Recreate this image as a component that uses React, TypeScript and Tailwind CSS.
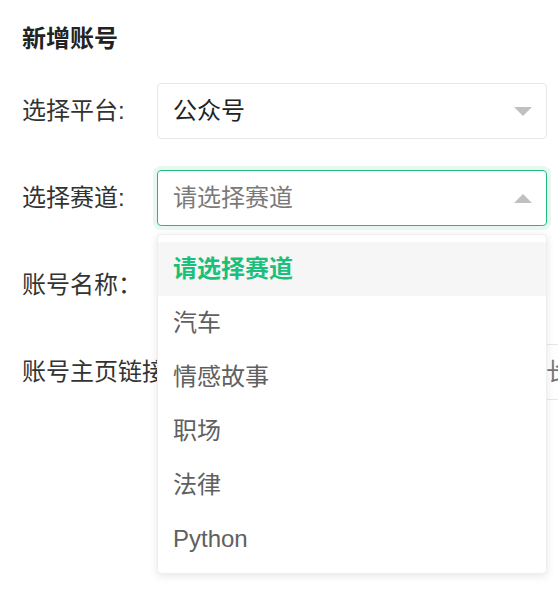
import React from "react";

const font = { fontFamily: '"Liberation Sans", "Noto Sans CJK SC", sans-serif' };

function Caret({ up }: { up?: boolean }) {
  return (
    <svg width="18" height="9" viewBox="0 0 18 9" className="shrink-0">
      {up ? <polygon points="0,9 18,9 9,0" fill="#c0c0c0" /> : <polygon points="0,0 18,0 9,9" fill="#c0c0c0" />}
    </svg>
  );
}

export default function App() {
  const items = ["汽车", "情感故事", "职场", "法律", "Python"];
  return (
    <div className="w-[558px] h-[606px] overflow-hidden bg-white relative" style={font}>
      <div className="pt-[23px] pl-[22px]">
        <div className="h-[32px] leading-[32px] text-[24px] font-bold text-[#222]">新增账号</div>

        <div className="mt-[28px] flex items-center h-[56px]">
          <div className="w-[135px] shrink-0 text-[24px] text-[#333] whitespace-nowrap">选择平台:</div>
          <div className="w-[390px] h-[56px] border border-[#e6e6e6] rounded-[4px] flex items-center justify-between pl-[15px] pr-[14px]">
            <span className="text-[24px] text-[#222]">公众号</span>
            <Caret />
          </div>
        </div>

        <div className="mt-[31px] flex items-center h-[56px]">
          <div className="w-[135px] shrink-0 text-[24px] text-[#333] whitespace-nowrap">选择赛道:</div>
          <div className="relative w-[390px] h-[56px]">
            <div className="w-[390px] h-[56px] border border-[#1cbf7a] rounded-[4px] shadow-[0_0_0_4px_#e8f8f0] flex items-center justify-between pl-[15px] pr-[14px]">
              <span className="text-[24px] text-[#7a7a7a]">请选择赛道</span>
              <Caret up />
            </div>
            <div className="absolute z-10 left-0 top-[64px] w-[390px] bg-white rounded-[4px] border border-[#eeeeee] shadow-[0_2px_8px_rgba(0,0,0,0.10)] py-[7px]">
              <div className="h-[54px] flex items-center pl-[15px] bg-[#f6f6f6] text-[24px] font-bold text-[#1cbf7a]">请选择赛道</div>
              {items.map((t) => (
                <div key={t} className="h-[54px] flex items-center pl-[15px] text-[24px] text-[#606060]">{t}</div>
              ))}
            </div>
          </div>
        </div>

        <div className="mt-[31px] flex items-center h-[56px]">
          <div className="w-[135px] shrink-0 text-[24px] text-[#333] whitespace-nowrap">账号名称：</div>
          <div className="w-[390px] h-[56px] border border-[#e6e6e6] rounded-[4px]" />
        </div>

        <div className="mt-[31px] flex items-center h-[56px]">
          <div className="shrink-0 text-[24px] text-[#333] whitespace-nowrap mr-[28px]">账号主页链接：</div>
          <div className="w-[390px] shrink-0 h-[56px] border border-[#e6e6e6] rounded-[4px] flex items-center pl-[15px] overflow-hidden">
            <span className="text-[24px] text-[#777] whitespace-nowrap">请输入账号的主页链接地址，长度</span>
          </div>
        </div>
      </div>
    </div>
  );
}
